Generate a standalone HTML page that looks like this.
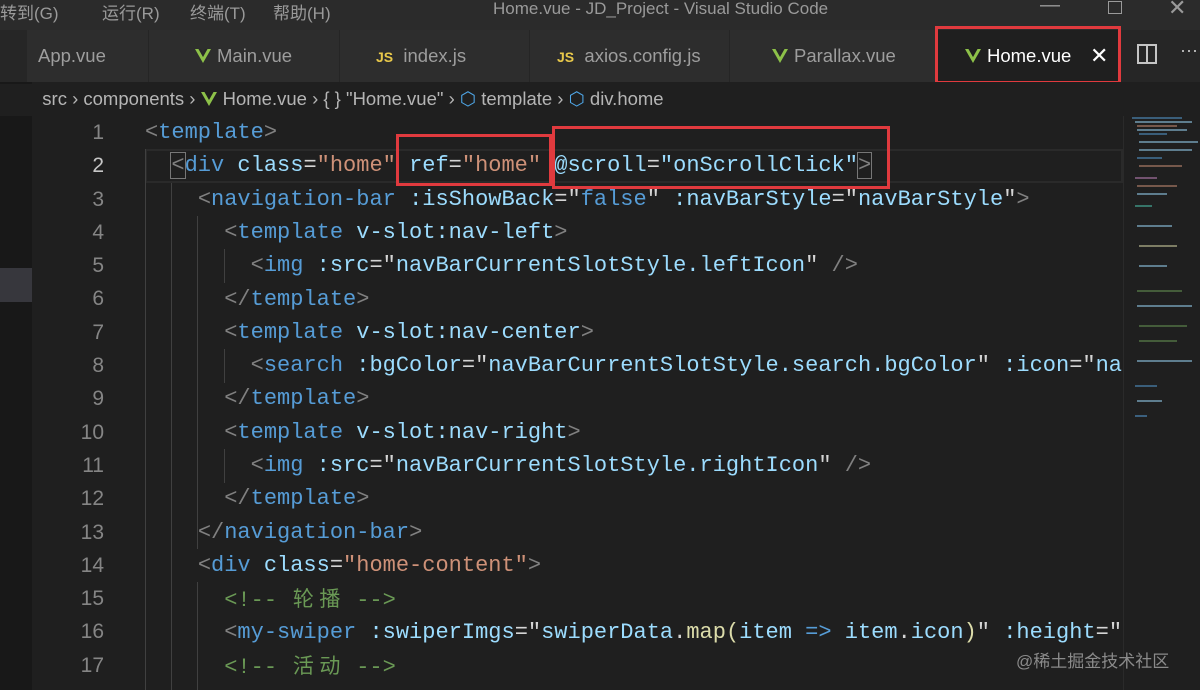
<!DOCTYPE html>
<html><head><meta charset="utf-8"><style>
*{margin:0;padding:0;box-sizing:border-box}
body{width:1200px;height:690px;overflow:hidden;background:#1f1f1f;font-family:"Liberation Sans","Noto Sans CJK SC",sans-serif;position:relative}
.title{position:absolute;left:0;top:0;width:1200px;height:30px;background:#2b2b2b;color:#9a9a9a;font-size:17px}
.title span{position:absolute;top:-1px}
.tabs{position:absolute;left:0;top:30px;width:1200px;height:52px;background:#262626}
.tab{position:absolute;top:0;height:52px;background:#2d2d2d;border-right:1px solid #252525;color:#9d9d9d;font-size:18.5px;line-height:52px}
.side{position:absolute;left:0;top:30px;width:32px;height:660px;background:#181818}
.crumb{position:absolute;left:32px;top:82px;width:1168px;height:34px;background:#1f1f1f;color:#b5b5b5;font-size:18.5px;line-height:34px;white-space:pre}
.v{display:inline-block;width:16px;height:14px;vertical-align:-1px;margin-right:6px}
.js{color:#e8c84a;font-weight:bold;font-size:14px}
.code{position:absolute;left:0;top:116px;width:1123px;height:574px;overflow:hidden;font-family:"Liberation Mono","Noto Sans CJK SC",monospace;font-size:22px}
.ln{position:absolute;left:40px;width:64px;text-align:right;color:#858585;font-family:"Liberation Sans",sans-serif;font-size:21px}
.l{position:absolute;left:145px;white-space:pre;color:#d4d4d4;height:33.3px;line-height:33.3px}
.g{color:#808080}.t{color:#569cd6}.a{color:#9cdcfe}.s{color:#ce9178}.c{color:#6a9955}.y{color:#dcdcaa}
.cj{display:inline-block;width:26.4px;text-align:center;font-family:"Noto Sans CJK SC",sans-serif;font-size:21px}
.guide{position:absolute;width:1px;background:#404040}
.box{position:absolute;border:3px solid #e03a3e}
</style></head><body>
<svg width="0" height="0" style="position:absolute"><defs><symbol id="vue" viewBox="0 0 16 14"><path d="M0 0H3.5L8 8 12.5 0H16L8 14Z" fill="#8dc149"/><path d="M3.5 0H6L8 3.5 10 0H12.5L8 8Z" fill="#1f1f1f" opacity="0.3"/></symbol></defs></svg>
<div class="title">
<span style="left:0">转到(G)</span><span style="left:102px">运行(R)</span><span style="left:190px">终端(T)</span><span style="left:273px">帮助(H)</span>
<span style="left:493px">Home.vue - JD_Project - Visual Studio Code</span>
<span style="left:1040px;top:-6px;font-size:20px">—</span>
<span style="left:1108px;top:1px;width:14px;height:13px;border:1.5px solid #9a9a9a"></span>
<span style="left:1168px;top:-5px;font-size:22px">✕</span>
</div>
<div class="side"><div style="position:absolute;left:0;top:238px;width:32px;height:34px;background:#37373d"></div><div style="position:absolute;left:2px;top:25px;width:3px;height:3px;background:#ccc"></div><div style="position:absolute;left:0;top:54px;width:32px;height:32px;background:#1f1f1f"></div></div>
<div class="tabs">
<div class="tab" style="left:27px;width:122px;padding-left:11px">App.vue</div>
<div class="tab" style="left:149px;width:191px;padding-left:46px"><svg class="v"><use href="#vue"/></svg>Main.vue</div>
<div class="tab" style="left:340px;width:190px;padding-left:36px"><span class="js">JS</span>&nbsp; index.js</div>
<div class="tab" style="left:530px;width:200px;padding-left:27px"><span class="js">JS</span>&nbsp; axios.config.js</div>
<div class="tab" style="left:730px;width:207px;padding-left:42px"><svg class="v"><use href="#vue"/></svg>Parallax.vue</div>
<div class="tab" style="left:937px;width:182px;padding-left:28px;background:#1f1f1f;color:#fff"><svg class="v"><use href="#vue"/></svg>Home.vue<span style="position:absolute;left:153px;font-size:22px">✕</span></div>
<div class="box" style="left:935px;top:-4px;width:186px;height:58px"></div>
<div style="position:absolute;left:1137px;top:14px;width:20px;height:20px;border:2px solid #c5c5c5"></div><div style="position:absolute;left:1146px;top:14px;width:2px;height:20px;background:#c5c5c5"></div>
<div style="position:absolute;left:1180px;top:10px;color:#c5c5c5;font-size:18px">···</div>
</div>
<div class="crumb">  src › components › <svg class="v"><use href="#vue"/></svg>Home.vue › { } "Home.vue" › <span style="color:#4fa7e8">⬡</span> template › <span style="color:#4fa7e8">⬡</span> div.home</div>
<div class="code">
<div style="position:absolute;left:145px;top:33px;width:978px;height:34px;border:2px solid #2a2a2a"></div>
<div class="guide" style="left:145px;top:33px;height:560px"></div>
<div class="guide" style="left:171px;top:67px;height:530px"></div>
<div class="guide" style="left:197px;top:100px;height:333px"></div>
<div class="guide" style="left:224px;top:133px;height:34px"></div>
<div class="guide" style="left:224px;top:233px;height:34px"></div>
<div class="guide" style="left:224px;top:333px;height:34px"></div>
<div class="guide" style="left:197px;top:466px;height:120px"></div>
<div class="ln" style="top:0;line-height:33.3px">1<br><span style="color:#c6c6c6">2</span><br>3<br>4<br>5<br>6<br>7<br>8<br>9<br>10<br>11<br>12<br>13<br>14<br>15<br>16<br>17</div>
<div class="l" style="top:0"><span class="g">&lt;</span><span class="t">template</span><span class="g">&gt;</span></div>
<div class="l" style="top:33.3px">  <span class="g" style="outline:1px solid #777">&lt;</span><span class="t">div</span> <span class="a">class</span>=<span class="s">"home"</span> <span class="a">ref</span>=<span class="s">"home"</span> <span class="a">@scroll</span>=<span class="a">"onScrollClick"</span><span class="g" style="outline:1px solid #777">&gt;</span></div>
<div class="l" style="top:66.6px">    <span class="g">&lt;</span><span class="t">navigation-bar</span> <span class="a">:isShowBack</span>="<span class="t">false</span>" <span class="a">:navBarStyle</span>="<span class="a">navBarStyle</span>"<span class="g">&gt;</span></div>
<div class="l" style="top:99.9px">      <span class="g">&lt;</span><span class="t">template</span> <span class="a">v-slot:nav-left</span><span class="g">&gt;</span></div>
<div class="l" style="top:133.2px">        <span class="g">&lt;</span><span class="t">img</span> <span class="a">:src</span>="<span class="a">navBarCurrentSlotStyle.leftIcon</span>" <span class="g">/&gt;</span></div>
<div class="l" style="top:166.5px">      <span class="g">&lt;/</span><span class="t">template</span><span class="g">&gt;</span></div>
<div class="l" style="top:199.8px">      <span class="g">&lt;</span><span class="t">template</span> <span class="a">v-slot:nav-center</span><span class="g">&gt;</span></div>
<div class="l" style="top:233.1px">        <span class="g">&lt;</span><span class="t">search</span> <span class="a">:bgColor</span>="<span class="a">navBarCurrentSlotStyle.search.bgColor</span>" <span class="a">:icon</span>="<span class="a">na</span></div>
<div class="l" style="top:266.4px">      <span class="g">&lt;/</span><span class="t">template</span><span class="g">&gt;</span></div>
<div class="l" style="top:299.7px">      <span class="g">&lt;</span><span class="t">template</span> <span class="a">v-slot:nav-right</span><span class="g">&gt;</span></div>
<div class="l" style="top:333px">        <span class="g">&lt;</span><span class="t">img</span> <span class="a">:src</span>="<span class="a">navBarCurrentSlotStyle.rightIcon</span>" <span class="g">/&gt;</span></div>
<div class="l" style="top:366.3px">      <span class="g">&lt;/</span><span class="t">template</span><span class="g">&gt;</span></div>
<div class="l" style="top:399.6px">    <span class="g">&lt;/</span><span class="t">navigation-bar</span><span class="g">&gt;</span></div>
<div class="l" style="top:432.9px">    <span class="g">&lt;</span><span class="t">div</span> <span class="a">class</span>=<span class="s">"home-content"</span><span class="g">&gt;</span></div>
<div class="l" style="top:466.2px">      <span class="c">&lt;!-- <span class="cj">轮</span><span class="cj">播</span> --&gt;</span></div>
<div class="l" style="top:499.5px">      <span class="g">&lt;</span><span class="t">my-swiper</span> <span class="a">:swiperImgs</span>="<span class="a">swiperData</span>.<span class="y">map</span><span class="y">(</span><span class="a">item</span> <span class="t">=&gt;</span> <span class="a">item</span>.<span class="a">icon</span><span class="y">)</span>" <span class="a">:height</span>="</div>
<div class="l" style="top:532.8px">      <span class="c">&lt;!-- <span class="cj">活</span><span class="cj">动</span> --&gt;</span></div>
</div>
<div style="position:absolute;left:1123px;top:116px;width:77px;height:574px;background:#1f1f1f;border-left:1px solid #2a2a2a">
<svg width="77" height="310" style="position:absolute;left:8px;top:0">
<g stroke-width="1.3" opacity="0.8">
<line x1="0" y1="2" x2="50" y2="2" stroke="#569cd6"/><line x1="3" y1="6" x2="60" y2="6" stroke="#9cdcfe"/><line x1="5" y1="10" x2="45" y2="10" stroke="#ce9178"/><line x1="5" y1="14" x2="55" y2="14" stroke="#9cdcfe"/><line x1="7" y1="18" x2="35" y2="18" stroke="#569cd6"/><line x1="7" y1="26" x2="66" y2="26" stroke="#9cdcfe"/><line x1="7" y1="34" x2="60" y2="34" stroke="#9cdcfe"/><line x1="5" y1="42" x2="30" y2="42" stroke="#569cd6"/><line x1="7" y1="50" x2="50" y2="50" stroke="#ce9178"/><line x1="3" y1="62" x2="25" y2="62" stroke="#c586c0"/><line x1="5" y1="70" x2="45" y2="70" stroke="#ce9178"/><line x1="5" y1="78" x2="35" y2="78" stroke="#9cdcfe"/><line x1="3" y1="90" x2="20" y2="90" stroke="#4ec9b0"/><line x1="5" y1="110" x2="40" y2="110" stroke="#9cdcfe"/><line x1="7" y1="130" x2="45" y2="130" stroke="#dcdcaa"/><line x1="7" y1="150" x2="35" y2="150" stroke="#9cdcfe"/><line x1="5" y1="175" x2="50" y2="175" stroke="#6a9955"/><line x1="5" y1="190" x2="60" y2="190" stroke="#9cdcfe"/><line x1="7" y1="210" x2="55" y2="210" stroke="#6a9955"/><line x1="7" y1="225" x2="45" y2="225" stroke="#6a9955"/><line x1="5" y1="245" x2="60" y2="245" stroke="#9cdcfe"/><line x1="3" y1="270" x2="25" y2="270" stroke="#569cd6"/><line x1="5" y1="285" x2="30" y2="285" stroke="#9cdcfe"/><line x1="3" y1="300" x2="15" y2="300" stroke="#569cd6"/>
</g></svg></div>
<div class="box" style="left:396px;top:134px;width:156px;height:52px"></div>
<div class="box" style="left:552px;top:126px;width:338px;height:63px"></div>
<div style="position:absolute;left:1016px;top:647px;color:#8a8a8a;font-size:17px;font-family:'Liberation Sans','Noto Sans CJK SC',sans-serif">@稀土掘金技术社区</div>
</body></html>
